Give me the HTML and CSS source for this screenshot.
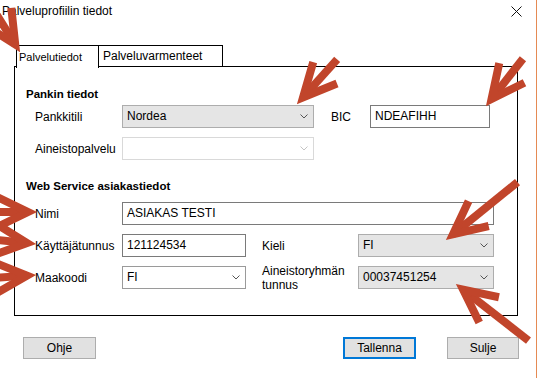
FILE: index.html
```html
<!DOCTYPE html>
<html>
<head>
    <meta charset="utf-8">
    <link rel="stylesheet" href="styles.css">
</head>
<body>
<div class="dialog">
    <div class="titlebar">
        <span class="title">Palveluprofiilin tiedot</span>
        <svg class="close" width="11" height="11" viewBox="0 0 11 11"><path d="M0.5 0.5 L10.5 10.5 M10.5 0.5 L0.5 10.5" stroke="#111" stroke-width="1"/></svg>
    </div>
    <div class="tabs">
        <div class="tab active">Palvelutiedot</div>
        <div class="tab">Palveluvarmenteet</div>
    </div>
    <div class="panel">
        <div class="section-title">Pankin tiedot</div>
        <div class="row">
            <span class="lbl">Pankkitili</span>
            <div class="combo w192">Nordea<svg class="chev" width="8" height="5" viewBox="0 0 8 5"><polyline points="0.5,0.5 4,4 7.5,0.5" fill="none" stroke="#555" stroke-width="1"/></svg></div>
            <span class="lbl-bic">BIC</span>
            <div class="text w120">NDEAFIHH</div>
        </div>
        <div class="row">
            <span class="lbl">Aineistopalvelu</span>
            <div class="combo disabled w192"><svg class="chev" width="8" height="5" viewBox="0 0 8 5"><polyline points="0.5,0.5 4,4 7.5,0.5" fill="none" stroke="#c4c4c4" stroke-width="1"/></svg></div>
        </div>

        <div class="section-title second">Web Service asiakastiedot</div>
        <div class="row">
            <span class="lbl">Nimi</span>
            <div class="text w372">ASIAKAS TESTI</div>
        </div>
        <div class="row">
            <span class="lbl">Käyttäjätunnus</span>
            <div class="text w124">121124534</div>
            <span class="lbl-right">Kieli</span>
            <div class="combo w136">FI<svg class="chev" width="8" height="5" viewBox="0 0 8 5"><polyline points="0.5,0.5 4,4 7.5,0.5" fill="none" stroke="#555" stroke-width="1"/></svg></div>
        </div>
        <div class="row">
            <span class="lbl">Maakoodi</span>
            <div class="combo light w124">FI<svg class="chev" width="8" height="5" viewBox="0 0 8 5"><polyline points="0.5,0.5 4,4 7.5,0.5" fill="none" stroke="#555" stroke-width="1"/></svg></div>
            <span class="lbl-right two">Aineistoryhmän<br>tunnus</span>
            <div class="combo w136">00037451254<svg class="chev" width="8" height="5" viewBox="0 0 8 5"><polyline points="0.5,0.5 4,4 7.5,0.5" fill="none" stroke="#555" stroke-width="1"/></svg></div>
        </div>
    </div>
    <div class="buttons">
        <div class="btn">Ohje</div>
        <div class="spacer"></div>
        <div class="btn default">Tallenna</div>
        <div class="btn sulje">Sulje</div>
    </div>

    <!-- annotation arrows on top of the screenshot -->
    <svg class="arrows" width="537" height="378" viewBox="0 0 537 378">
        <defs>
            <g id="arw" fill="none" stroke="#c1452b" stroke-width="8" stroke-linejoin="miter" stroke-miterlimit="10">
                <path d="M-60 0 L-9 0"/>
                <path d="M-42 -16 L-9 0 L-42 16"/>
            </g>
            <g id="arwlong" fill="none" stroke="#c1452b" stroke-width="8" stroke-linejoin="miter" stroke-miterlimit="10">
                <path d="M-92 0 L-9 0"/>
                <path d="M-42 -16 L-9 0 L-42 16"/>
            </g>
        </defs>
        <use href="#arw" transform="translate(20,52) rotate(58)"/>
        <use href="#arw" transform="translate(297,104) rotate(132)"/>
        <use href="#arw" transform="translate(486,106) rotate(128)"/>
        <use href="#arw" transform="translate(37,212) rotate(0)"/>
        <use href="#arw" transform="translate(36,244) rotate(6)"/>
        <use href="#arw" transform="translate(36,275) rotate(-4)"/>
        <use href="#arwlong" transform="translate(446,240) rotate(141)"/>
        <use href="#arwlong" transform="translate(456,284) rotate(-142)"/>
    </svg>
</div>
</body>
</html>
```
FILE: styles.css
```css
body {
    margin: 0;
    background: #fff;
    font-family: "Liberation Sans", Arial, sans-serif;
    font-size: 12px;
    color: #000;
}
.dialog {
    position: relative;
    width: 536px;
    height: 378px;
    border-right: 1px solid #e58a53;
    background: #fff;
    overflow: hidden;
}
.titlebar {
    height: 45px;
    display: flex;
    justify-content: space-between;
    align-items: flex-start;
}
.title {
    margin: 4px 0 0 2px;
    line-height: 14px;
}
.close {
    margin: 6px 14px 0 0;
}
.tabs {
    display: flex;
    margin-left: 16px;
    height: 21px;
    position: relative;
    z-index: 1;
}
.tab {
    border: 1px solid #000;
    border-bottom: none;
    background: #fff;
    box-sizing: border-box;
}
.tab.active {
    width: 83px;
    height: 23px;
    font-size: 11px;
    line-height: 19px;
    padding: 2px 0 0 2px;
}
.tab + .tab {
    border-left: none;
    width: 124px;
    height: 21px;
    line-height: 21px;
    padding-left: 4px;
}
.panel {
    margin-left: 14px;
    width: 504px;
    height: 250px;
    box-sizing: border-box;
    border: 1px solid #000;
    padding: 20px 0 0 11px;
}
.section-title {
    font-weight: bold;
    font-size: 11.5px;
    line-height: 14px;
    margin-bottom: 4px;
}
.section-title.second {
    margin-top: 19px;
    margin-bottom: 9px;
}
.row {
    display: flex;
    align-items: center;
    height: 23px;
    padding-left: 9px;
}
.row + .row {
    margin-top: 9px;
}
.lbl {
    width: 87px;
    flex: none;
}
.lbl-bic {
    width: 39px;
    margin-left: 17px;
}
.lbl-right {
    width: 96px;
    margin-left: 16px;
}
.lbl-right.two {
    line-height: 14px;
    margin-top: 1px;
}
.text, .combo {
    box-sizing: border-box;
    height: 23px;
    line-height: 21px;
    padding-left: 4px;
    flex: none;
}
.text {
    border: 1px solid #7a7a7a;
    background: #fff;
}
.combo {
    border: 1px solid #adadad;
    background: #e5e5e5;
    display: flex;
    justify-content: space-between;
    align-items: center;
    padding-right: 5px;
}
.combo.disabled {
    background: #fff;
    border-color: #d9d9d9;
    justify-content: flex-end;
}
.combo.light {
    background: #fff;
    border-color: #9a9a9a;
}
.w120 { width: 120px; }
.w124 { width: 124px; }
.w136 { width: 136px; }
.w192 { width: 192px; }
.w372 { width: 372px; }

.buttons {
    display: flex;
    margin-top: 21px;
    padding: 0 17px 0 23px;
}
.spacer {
    flex: 1;
}
.btn {
    width: 73px;
    height: 22px;
    box-sizing: border-box;
    border: 1px solid #adadad;
    background: #e1e1e1;
    text-align: center;
    line-height: 20px;
}
.btn.default {
    border: 2px solid #0078d7;
    line-height: 18px;
}
.btn.sulje {
    width: 72px;
    margin-left: 31px;
}
.arrows {
    position: absolute;
    top: 0;
    left: 0;
    pointer-events: none;
    z-index: 5;
}
```
